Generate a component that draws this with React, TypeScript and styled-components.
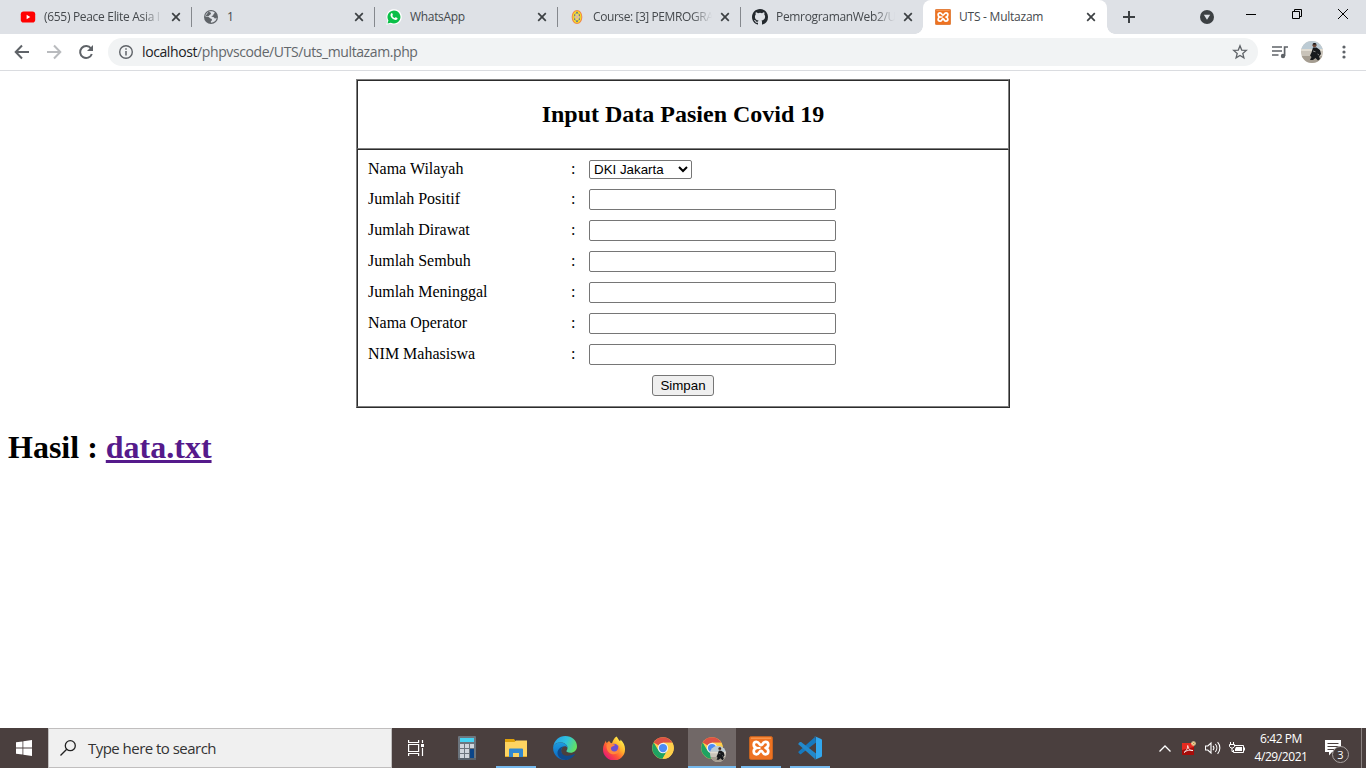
import React from "react";
import styled, { createGlobalStyle, css } from "styled-components";

const Global = createGlobalStyle`
  * { box-sizing: border-box; }
  html, body { margin: 0; padding: 0; background: #fff; overflow: hidden; }
  svg { display: block; flex: none; }
`;

const ui = `"Open Sans", "Noto Sans", sans-serif`;
const serif = `"Liberation Serif", "Times New Roman", serif`;
const sans = `"Liberation Sans", Arial, sans-serif`;

const Screen = styled.div`
  width: 1366px;
  height: 768px;
  display: flex;
  flex-direction: column;
  background: #fff;
  overflow: hidden;
`;

/* ---------- browser frame ---------- */

const TabStrip = styled.div`
  height: 34px;
  flex: none;
  display: flex;
  padding-left: 8px;
  background: #dee1e6;
`;

const TabBox = styled.div<{ $active?: boolean; $line?: boolean }>`
  position: relative;
  width: 183px;
  height: 34px;
  flex: none;
  display: flex;
  align-items: center;
  padding-left: 12px;
  ${(p) =>
    p.$line &&
    css`
      &::after {
        content: "";
        position: absolute;
        right: -1px;
        top: 7px;
        width: 1px;
        height: 20px;
        background: #85888d;
      }
    `}
  ${(p) =>
    p.$active &&
    css`
      width: 184px;
      background: #fff;
      border-radius: 8px 8px 0 0;
      &::before,
      &::after {
        content: "";
        position: absolute;
        bottom: 0;
        width: 8px;
        height: 8px;
      }
      &::before {
        left: -8px;
        background: radial-gradient(circle at 0 0, transparent 7.5px, #fff 8px);
      }
      &::after {
        right: -8px;
        background: radial-gradient(circle at 100% 0, transparent 7.5px, #fff 8px);
      }
    `}
`;

const Title = styled.span<{ $spacing: number; $fade?: boolean }>`
  width: 120px;
  margin-left: 8px;
  white-space: nowrap;
  font: 12px/18px ${ui};
  letter-spacing: ${(p) => p.$spacing}px;
  color: #45494d;
  ${(p) =>
    p.$fade &&
    css`
      mask-image: linear-gradient(90deg, #000 98px, transparent 119px);
    `}
`;

const CloseSlot = styled.span`
  margin-left: 7px;
`;

const NewTab = styled.div`
  width: 44px;
  display: grid;
  place-items: center;
`;

const WindowControls = styled.div`
  margin-left: auto;
  display: flex;
  align-items: flex-start;
`;

const ControlSlot = styled.div<{ $w: number; $h: number }>`
  width: ${(p) => p.$w}px;
  height: ${(p) => p.$h}px;
  display: grid;
  place-items: center;
`;

const Toolbar = styled.div`
  height: 37px;
  flex: none;
  display: flex;
  align-items: center;
  padding-left: 6px;
  border-bottom: 1px solid #dadce0;
  background: #fff;
`;

const ToolSlot = styled.div<{ $w?: number }>`
  width: ${(p) => p.$w ?? 32}px;
  height: 28px;
  display: grid;
  place-items: center;
`;

const AddressBar = styled.div`
  width: 1150px;
  height: 28px;
  margin-left: 6px;
  padding: 0 10px;
  display: flex;
  align-items: center;
  border-radius: 14px;
  background: #f1f3f4;
`;

const Url = styled.span`
  flex: 1;
  margin-left: 8px;
  font: 14px/20px ${ui};
  letter-spacing: -0.4px;
  color: #63676b;
  b {
    font-weight: 400;
    color: #202124;
  }
`;

/* ---------- page ---------- */

const Page = styled.main`
  flex: 1;
  padding: 8px;
  font: 16px/18px ${serif};
  color: #000;
`;

const FormTable = styled.form`
  width: 654px;
  margin: 0 auto;
  border: 1px solid;
  border-color: #808080 #2c2c2c #2c2c2c #808080;
`;

const Cell = styled.section`
  border: 1px solid;
  border-color: #2c2c2c #808080 #808080 #2c2c2c;
`;

const HeaderCell = styled(Cell)`
  height: 69px;
  display: grid;
  place-items: center;
`;

const Heading = styled.h2`
  margin: 0;
  font: bold 24px/27px ${serif};
`;

const BodyCell = styled(Cell)`
  padding: 5px;
`;

const Row = styled.div`
  display: grid;
  grid-template-columns: 203px 18px 1fr;
  align-items: center;
  & > * {
    margin: 5px;
  }
`;

const Label = styled.label`
  padding-bottom: 2px;
  line-height: 17px;
`;

const Select = styled.select`
  width: 103px;
  height: 19px;
  padding: 0;
  border: 1px solid #767676;
  border-radius: 2px;
  background: #fff;
  color: #000;
  font: 13.333px ${sans};
`;

const Input = styled.input`
  width: 247px;
  height: 21px;
  padding: 1px 2px;
  border: 1px solid #767676;
  border-radius: 2px;
  background: #fff;
`;

const Actions = styled.div`
  height: 31px;
  padding: 5px;
  display: flex;
  justify-content: center;
`;

const Submit = styled.button`
  width: 62px;
  height: 21px;
  padding: 0;
  border: 1px solid #767676;
  border-radius: 3px;
  background: #efefef;
  color: #000;
  font: 13.333px/17px ${sans};
`;

const Result = styled.h1`
  margin: 21px 0 0;
  font: bold 32px/37px ${serif};
  a {
    color: #551a8b;
    text-decoration: underline;
  }
`;

/* ---------- taskbar ---------- */

const Taskbar = styled.footer`
  height: 40px;
  flex: none;
  display: flex;
  background: #4a3f3e;
`;

const Start = styled.div`
  width: 48px;
  display: grid;
  place-items: center;
`;

const Search = styled.div`
  width: 344px;
  padding-left: 11px;
  display: flex;
  align-items: center;
  border: 1px solid #c0bebe;
  background: #f0f0f0;
  color: #333;
  font: 15px/20px ${ui};
  letter-spacing: -0.53px;
  span {
    margin-left: 12px;
  }
`;

const TaskView = styled.div`
  width: 48px;
  margin-right: 3px;
  display: grid;
  place-items: center;
`;

const AppButton = styled.div<{ $open?: boolean; $active?: boolean }>`
  width: 48px;
  height: 40px;
  margin-right: 1px;
  display: grid;
  place-items: center;
  background: ${(p) =>
    p.$active
      ? "linear-gradient(#76b9ed, #76b9ed) 0 38px / 48px 2px no-repeat #716867"
      : p.$open
        ? "linear-gradient(#76b9ed, #76b9ed) 4px 38px / 40px 2px no-repeat"
        : "none"};
`;

const Tray = styled.div`
  margin-left: auto;
  display: flex;
  align-items: center;
`;

const TraySlot = styled.div<{ $w: number }>`
  width: ${(p) => p.$w}px;
  display: grid;
  place-items: center;
`;

const Clock = styled.div`
  width: 64px;
  padding-bottom: 1px;
  color: #fff;
  text-align: center;
  white-space: nowrap;
  font: 12px/18px ${ui};
  letter-spacing: -0.42px;
`;

const Notification = styled.div`
  position: relative;
  width: 48px;
  height: 40px;
  padding: 12px 0 0 12px;
`;

const Count = styled.span`
  position: absolute;
  left: 19px;
  top: 18px;
  width: 17px;
  height: 17px;
  border: 1px solid #aaa4a3;
  border-radius: 50%;
  background: #473d3c;
  color: #fff;
  text-align: center;
  font: 11px/15px ${ui};
`;

const ShowDesktop = styled.div`
  width: 5px;
  height: 40px;
  border-left: 1px solid #8a8281;
`;

/* ---------- drawings ---------- */

const Close = () => (
  <svg width="10" height="10" viewBox="0 0 10 10" stroke="#3c4043" strokeWidth="1.7">
    <path d="M1.2 1.2l7.6 7.6M8.8 1.2L1.2 8.8" />
  </svg>
);

const YouTube = () => (
  <svg width="16" height="16" viewBox="0 0 16 16">
    <rect x=".8" y="2.4" width="14.4" height="11.2" rx="2.8" fill="#f00" />
    <path d="M6.6 5.8v4.4L10.3 8z" fill="#fff" />
  </svg>
);

const Globe = () => (
  <svg width="16" height="16" viewBox="0 0 16 16">
    <circle cx="8" cy="8" r="7" fill="#5f6368" />
    <path d="M8 2.3c1.5 0 2.8.5 3.8 1.3-.3 1-1.4 1.3-1.5 2.4-.1 1-1.6.5-1.9 1.6.9.5 2.6.2 3 1.3.5 1 2.1.3 2.4-.3A5.8 5.8 0 0 1 8 13.7c-.3-.8-.2-1.6.6-2 .5-.4.6-1.5-.3-1.9-1-.4-1.8-.5-2.2-1.5C5 8 3.5 8 2.3 7.3 2.6 4.5 5 2.3 8 2.3z" fill="#dee1e6" />
    <path d="M5.5 2.7c.8.5 2.5.5 2.5 1.7S6.2 5.6 6 6.8c-.3 1-2.5.4-3.5.2z" fill="#5f6368" />
  </svg>
);

const WhatsApp = () => (
  <svg width="16" height="16" viewBox="0 0 16 16">
    <path d="M.3 15.700l1.100-4A7.700 7.700 0 1 1 4.500 14.700z" fill="#fff" />
    <path d="M1.500 14.500l.9-3.100A6.500 6.500 0 1 1 4.800 13.700z" fill="#0abf48" />
    <path d="M5.4 4.3c.3-.3.800-.2.900.1l.6 1.4c.1.4-.5.8-.5 1.100.4.9 1.300 1.700 2.300 2.100.4.100.8-.8 1.200-.7l1.400.7c.4.2.2 1.200-.3 1.600-1.900 1.500-6.500-1.600-6.500-4.600 0-.7.5-1.300.9-1.700z" fill="#fff" />
  </svg>
);

const Campus = () => (
  <svg width="16" height="16" viewBox="0 0 16 16">
    <ellipse cx="8" cy="8" rx="4.8" ry="6.5" fill="#fce51c" stroke="#f08b4d" strokeWidth="1.100" />
    <ellipse cx="8" cy="8" rx="3" ry="4" fill="#f2df55" stroke="#a5a061" strokeWidth=".7" />
    <circle cx="8" cy="8" r="1.700" fill="#d7b5b1" />
    <g fill="#586ca0">
      <rect x="7.200" y="2.800" width="1.600" height="1.600" />
      <rect x="7.200" y="11.500" width="1.600" height="1.600" />
      <rect x="5" y="5.500" width="1.300" height="1.300" />
      <rect x="9.700" y="5.500" width="1.300" height="1.300" />
      <rect x="5" y="9.500" width="1.300" height="1.300" />
      <rect x="9.700" y="9.500" width="1.300" height="1.300" />
    </g>
  </svg>
);

const GitHub = () => (
  <svg width="16" height="16" viewBox="0 0 16 16" fill="#24292e">
    <path d="M8 0C3.58 0 0 3.58 0 8c0 3.54 2.29 6.53 5.47 7.59.4.07.55-.17.55-.38 0-.19-.01-.82-.01-1.49-2.01.37-2.53-.49-2.69-.94-.09-.23-.48-.94-.82-1.13-.28-.15-.68-.52-.01-.53.63-.01 1.08.58 1.23.82.72 1.21 1.87.87 2.33.66.07-.52.28-.87.51-1.07-1.78-.2-3.64-.89-3.64-3.95 0-.87.31-1.59.82-2.15-.08-.2-.36-1.02.08-2.12 0 0 .67-.21 2.2.82a7.600 7.600 0 0 1 4 0c1.53-1.04 2.2-.82 2.2-.82.44 1.1.16 1.92.08 2.12.51.56.82 1.27.82 2.15 0 3.07-1.87 3.75-3.65 3.95.29.25.54.73.54 1.48 0 1.07-.01 1.93-.01 2.2 0 .21.15.46.55.38A8 8 0 0 0 16 8c0-4.42-3.58-8-8-8z" />
  </svg>
);

const Xampp = ({ size }: { size: number }) => (
  <svg width={size} height={size} viewBox="0 0 24 24">
    <rect x=".4" y=".4" width="23.2" height="23.2" rx="2" fill="#ee7221" stroke="#cf661e" strokeWidth=".8" />
    <path d="M2 2.2h20" stroke="#fa9b55" strokeWidth="1.2" />
    <g fill="none" stroke="#fff" strokeWidth="2.700" strokeLinejoin="round">
      <path d="M7.500 12C3.700 11 3.900 5.800 7.500 5.800c2.800 0 2.600 3.300 4.500 3.300s1.700-3.300 4.500-3.300c3.600 0 3.800 5.200 0 6.200 3.800 1 3.600 6.300 0 6.300-2.800 0-2.600-3.400-4.500-3.400s-1.700 3.400-4.500 3.400C3.900 18.300 3.700 13 7.500 12z" />
      <path d="M7 12h4.500" strokeWidth="2.200" />
    </g>
  </svg>
);

const Avatar = ({ size }: { size: number }) => (
  <svg width={size} height={size} viewBox="0 0 22 22">
    <defs>
      <clipPath id={`face${size}`}>
        <circle cx="11" cy="11" r="11" />
      </clipPath>
    </defs>
    <g clipPath={`url(#face${size})`}>
      <rect width="22" height="22" fill="#c9c3b9" />
      <rect width="22" height="8" fill="#bccbd4" />
      <rect y="8" width="22" height="2" fill="#e1dcd2" />
      <path d="M0 15h22v7H0z" fill="#a59d91" />
      <circle cx="13.500" cy="4.200" r="2" fill="#6d4a3b" />
      <path d="M11.500 3.500c.3-2 3.700-2 4 0z" fill="#17191c" />
      <path d="M12 6.500h3.500l3.500 2.500 1 4-2 2.500 1 2.500-2 1.500-2.500-2.500-2.500 2h-3l1.500-3-1.500-1.500 1.500-3z" fill="#17191c" />
      <path d="M12 10l2.500.8M16.500 13l1.500 1" stroke="#858585" />
    </g>
  </svg>
);

const Chrome = () => (
  <svg width="22" height="22" viewBox="0 0 24 24">
    <circle cx="12" cy="12" r="11.8" fill="#ffd04b" />
    <path d="M12 12L1.800 6.100A11.800 11.800 0 0 1 22.300 6.300H12z" fill="#dd5144" />
    <path d="M1.800 6.100A11.800 11.800 0 0 0 11.500 23.800l5.200-9L12 12 7 14.800z" fill="#1ea362" />
    <path d="M22.200 6.300A11.800 11.800 0 0 1 11.500 23.800L17 14.500 12 6.300z" fill="#ffd04b" />
    <circle cx="12" cy="12" r="5.7" fill="#f1f1f1" />
    <circle cx="12" cy="12" r="4.5" fill="#4c8bf5" />
  </svg>
);

const ProfileChrome = styled.div`
  position: relative;
  width: 24px;
  height: 24px;
  padding: 1px;
  & > svg:last-child {
    position: absolute;
    left: 10px;
    top: 10px;
  }
`;

const Calculator = () => (
  <svg width="18" height="24" viewBox="0 0 18 24">
    <rect width="18" height="24" rx="1" fill="#6c757e" />
    <path d="M0 22h18v2H0z" fill="#58616b" />
    <rect x="2" y="2" width="14" height="4" fill="#45d3f3" />
    <g fill="#cfd5dc">
      {[8, 13, 18].map((y) =>
        [2, 7, 12].map((x) => <rect key={`${x}-${y}`} x={x} y={y} width="4" height="4" />)
      )}
    </g>
    <path d="M12 13h4v9h-4z" fill="#0b4588" />
  </svg>
);

const Explorer = () => (
  <svg width="22" height="19" viewBox="0 0 22 19">
    <path d="M0 0h9l1.500 2H22v5H0z" fill="#dfa10a" />
    <path d="M0 3h9.500L11 1.500h11V18H0z" fill="#fed461" />
    <path d="M0 17h22v1H0z" fill="#e7ac27" />
    <path d="M4 10.500a1 1 0 0 1 1-1h12a1 1 0 0 1 1 1V18h-4v-4H8v4H4z" fill="#3288cf" />
    <path d="M8 14h6v4H8z" fill="#fed461" />
  </svg>
);

const Edge = () => (
  <svg width="24" height="24" viewBox="0 0 24 24">
    <defs>
      <linearGradient id="edgeTop" x1="0" y1=".3" x2="1" y2=".6">
        <stop offset="0" stopColor="#269ee4" />
        <stop offset=".5" stopColor="#2fc2df" />
        <stop offset="1" stopColor="#66e35a" />
      </linearGradient>
      <linearGradient id="edgeLow" x1="0" y1="0" x2="0" y2="1">
        <stop offset="0" stopColor="#1c9be0" />
        <stop offset="1" stopColor="#0c65bd" />
      </linearGradient>
    </defs>
    <path d="M.2 11C1 4.500 6 0 12.200 0 19 0 24 4.800 24 10.300c0 4-3 6.500-6.500 6.500-3 0-4.200-1-4.200-1.700 0-.5 1.200-1.200 1.200-3.200C14.500 8.500 11 6.500 7.500 6.500 3.500 6.500 1 8.500.2 11z" fill="url(#edgeTop)" />
    <path d="M.2 11C1 8.300 4 6.500 7.500 6.500c4 0 7 2.500 7 5.400-.4-1-1.400-1.700-2.600-1.700-2.400 0-4 2.300-3.800 5 .2 4.200 4 7.300 8 7.500-1.400.8-2.700 1.200-4.100 1.200C5 24-.5 18.200.2 11z" fill="url(#edgeLow)" />
    <path d="M8.200 15.200c-.2-2.300 1-4 2.200-4.700C6.500 11 4 14.500 4.600 18c.8 4 5 6.300 9 5.900 3.500-.5 6.500-2.400 8.200-5.300.3-.5-.1-.7-.5-.5-5.300 2.700-12.500 2.200-13.100-2.900z" fill="#114a8b" />
  </svg>
);

const Firefox = () => (
  <svg width="24" height="24" viewBox="0 0 24 24">
    <defs>
      <linearGradient id="fox" x1=".85" y1=".1" x2=".15" y2=".9">
        <stop offset="0" stopColor="#fff44f" />
        <stop offset=".35" stopColor="#ffb12b" />
        <stop offset=".65" stopColor="#ff5634" />
        <stop offset="1" stopColor="#e51778" />
      </linearGradient>
    </defs>
    <path d="M14.500.5c1.500 1.500 2 3.300 3.500 4.800.5-.5.5-1.300.5-1.800 3.200 3 4.700 6.500 4.500 10A11 11 0 0 1 1 13.500C1 9.500 2.500 7 4 4.500c0 1 .2 2 .8 2.500C6 6 6.700 5.500 7 4.500c.5 1.500 1.200 2.500 3 2.700C11 4.500 12 2 14.500.5z" fill="url(#fox)" />
    <circle cx="12" cy="12.8" r="5" fill="#7651d8" />
    <path d="M4.500 9c2-2 4-1.500 5.500-.8 1 .4 2.500.3 3 .6-.4 1-2 1.400-3 2 .2 2.400 1.600 3.200 3.500 3.200 2.300 0 3-2.200 2.500-3.800 2.200 1.500 2.500 5-.5 7C11 20 4 17.500 4.500 9z" fill="#ff873c" />
    <circle cx="12.300" cy="12" r="3.400" fill="#6b4fd0" />
    <path d="M5.500 9c2-1.500 4.500-.8 7.500-.2-.4 1-2 1.400-3 2-1 .5-1.500 1.500-1 3C6.500 13 5.500 11 5.500 9z" fill="#ff873c" />
  </svg>
);

const VSCode = () => (
  <svg width="24" height="24" viewBox="0 0 24 24">
    <path d="M17.500.4L.6 15.600a.8.8 0 0 0 0 1.100l1.300 1.200c.4.3.8.3 1.200 0L18 6.500z" fill="#1679be" />
    <path d="M17.500 23.600L.6 8.400a.8.8 0 0 1 0-1.100l1.300-1.200c.4-.3.800-.3 1.200 0L18 17.500z" fill="#2389cb" />
    <path d="M17.500.4l5.700 2.700c.5.2.8.6.8 1.200v15.400c0 .6-.3 1-.8 1.200l-5.700 2.700c-.5.2-.9.100-1.200-.2.700.4 1.700 0 1.700-.9V1.500c0-.9-1-1.300-1.700-.9.3-.3.7-.4 1.200-.2z" fill="#31a7ee" />
  </svg>
);

const tabs = [
  { icon: <YouTube />, title: "(655) Peace Elite Asia I", spacing: -0.31, line: true, fade: true },
  { icon: <Globe />, title: "1", spacing: 0, line: true },
  { icon: <WhatsApp />, title: "WhatsApp", spacing: -0.32, line: true },
  { icon: <Campus />, title: "Course: [3] PEMROGRA", spacing: -0.42, line: true, fade: true },
  { icon: <GitHub />, title: "PemrogramanWeb2/U", spacing: -0.33, fade: true },
  { icon: <Xampp size={16} />, title: "UTS - Multazam", spacing: -0.24, active: true },
];

const fields = [
  "Jumlah Positif",
  "Jumlah Dirawat",
  "Jumlah Sembuh",
  "Jumlah Meninggal",
  "Nama Operator",
  "NIM Mahasiswa",
];

const apps = [
  { icon: <Calculator /> },
  { icon: <Explorer />, open: true },
  { icon: <Edge /> },
  { icon: <Firefox /> },
  { icon: <Chrome /> },
  {
    icon: (
      <ProfileChrome>
        <Chrome />
        <Avatar size={16} />
      </ProfileChrome>
    ),
    active: true,
  },
  { icon: <Xampp size={24} />, open: true },
  { icon: <VSCode />, open: true },
];

export default function App() {
  return (
    <Screen>
      <Global />
      <TabStrip>
        {tabs.map((t) => (
          <TabBox key={t.title} $active={t.active} $line={t.line}>
            {t.icon}
            <Title $spacing={t.spacing} $fade={t.fade}>{t.title}</Title>
            <CloseSlot><Close /></CloseSlot>
          </TabBox>
        ))}
        <NewTab>
          <svg width="12" height="12" viewBox="0 0 12 12" stroke="#3c4043" strokeWidth="2">
            <path d="M6 0v12M0 6h12" />
          </svg>
        </NewTab>
        <WindowControls>
          <ControlSlot $w={42} $h={34}>
            <svg width="14" height="14" viewBox="0 0 14 14">
              <circle cx="7" cy="7" r="7" fill="#3c4043" />
              <path d="M3.800 4.800h6.400L7 9.800z" fill="#dee1e6" />
            </svg>
          </ControlSlot>
          <ControlSlot $w={46} $h={28}>
            <svg width="10" height="10" viewBox="0 0 10 10" stroke="#000"><path d="M0 5.500h10" /></svg>
          </ControlSlot>
          <ControlSlot $w={46} $h={28}>
            <svg width="10" height="10" viewBox="0 0 10 10" stroke="#000" fill="none">
              <path d="M.5 2.500h7v7h-7zM2.500 2V.5h7v7H8" />
            </svg>
          </ControlSlot>
          <ControlSlot $w={46} $h={28}>
            <svg width="10" height="10" viewBox="0 0 10 10" stroke="#000"><path d="M0 0l10 10M10 0L0 10" /></svg>
          </ControlSlot>
        </WindowControls>
      </TabStrip>

      <Toolbar>
        <ToolSlot>
          <svg width="16" height="16" viewBox="0 0 16 16" fill="none" stroke="#5f6368" strokeWidth="2">
            <path d="M15 8H2M8 1.500L1.700 8 8 14.500" />
          </svg>
        </ToolSlot>
        <ToolSlot>
          <svg width="16" height="16" viewBox="0 0 16 16" fill="none" stroke="#b9bbbe" strokeWidth="2">
            <path d="M1 8h13M8 1.500L14.300 8 8 14.500" />
          </svg>
        </ToolSlot>
        <ToolSlot>
          <svg width="16" height="16" viewBox="0 0 16 16">
            <path d="M13 4.500A6 6 0 1 0 13.800 10" fill="none" stroke="#5f6368" strokeWidth="2" />
            <path d="M15 1v6H9z" fill="#5f6368" />
          </svg>
        </ToolSlot>
        <AddressBar>
          <svg width="16" height="16" viewBox="0 0 16 16">
            <circle cx="8" cy="8" r="6.300" fill="none" stroke="#5f6368" strokeWidth="1.400" />
            <path d="M7.250 7h1.500v4.500h-1.500zM7.250 4.300h1.500v1.500h-1.500z" fill="#5f6368" />
          </svg>
          <Url><b>localhost</b>/phpvscode/UTS/uts_multazam.php</Url>
          <svg width="16" height="16" viewBox="0 0 16 16" fill="none" stroke="#5f6368" strokeWidth="1.300">
            <path d="M8 1.800l1.700 4.300 4.600.3-3.500 3 1.100 4.500L8 11.500l-3.900 2.400 1.100-4.500-3.500-3 4.600-.3z" />
          </svg>
        </AddressBar>
        <ToolSlot $w={43}>
          <svg width="16" height="14" viewBox="0 0 16 14" stroke="#5f6368" strokeWidth="1.700" fill="none">
            <path d="M0 2h10M0 6h10M0 10h6.500M12.600 11V2H16" />
            <circle cx="11" cy="11" r="2.200" fill="#5f6368" stroke="none" />
          </svg>
        </ToolSlot>
        <ToolSlot $w={22}><Avatar size={22} /></ToolSlot>
        <ToolSlot $w={42}>
          <svg width="4" height="14" viewBox="0 0 4 14" fill="#5f6368">
            <circle cx="2" cy="2" r="1.600" /><circle cx="2" cy="7" r="1.600" /><circle cx="2" cy="12" r="1.600" />
          </svg>
        </ToolSlot>
      </Toolbar>

      <Page>
        <FormTable>
          <HeaderCell><Heading>Input Data Pasien Covid 19</Heading></HeaderCell>
          <BodyCell>
            <Row>
              <Label>Nama Wilayah</Label>
              <Label as="span">:</Label>
              <Select defaultValue="DKI Jakarta">
                <option>DKI Jakarta</option>
              </Select>
            </Row>
            {fields.map((name) => (
              <Row key={name}>
                <Label>{name}</Label>
                <Label as="span">:</Label>
                <Input type="text" />
              </Row>
            ))}
            <Actions><Submit type="button">Simpan</Submit></Actions>
          </BodyCell>
        </FormTable>
        <Result>Hasil : <a href="#data">data.txt</a></Result>
      </Page>

      <Taskbar>
        <Start>
          <svg width="16" height="16" viewBox="0 0 16 16" fill="#fff">
            <path d="M0 2.300l6.500-.9v6.200H0zM7.300 1.300L16 0v7.600H7.300zM0 8.400h6.500v6.200L0 13.700zM7.300 8.400H16V16l-8.700-1.300z" />
          </svg>
        </Start>
        <Search>
          <svg width="16" height="16" viewBox="0 0 16 16" fill="none" stroke="#222" strokeWidth="1.300">
            <circle cx="10.300" cy="5.700" r="5" />
            <path d="M6.700 9.300L.5 15.500" />
          </svg>
          <span>Type here to search</span>
        </Search>
        <TaskView>
          <svg width="16" height="16" viewBox="0 0 16 16" fill="none" stroke="#fff" strokeWidth="1.200">
            <path d="M.6 0v2.500h10V0M.6 16v-2.500h10V16M.6 4.500h10v7H.6zM14.500 0v3M14.500 8v8" />
            <path d="M13 4h3v3h-3z" fill="#fff" stroke="none" />
          </svg>
        </TaskView>
        {apps.map((a, i) => (
          <AppButton key={i} $open={a.open} $active={a.active}>{a.icon}</AppButton>
        ))}
        <Tray>
          <TraySlot $w={24}>
            <svg width="12" height="7" viewBox="0 0 12 7" fill="none" stroke="#fff" strokeWidth="1.300">
              <path d="M.5 6.500L6 1l5.500 5.500" />
            </svg>
          </TraySlot>
          <TraySlot $w={24}>
            <svg width="14" height="14" viewBox="0 0 14 14">
              <path d="M0 2h12v12H0z" fill="#a50d0a" />
              <path d="M0 2h12v4L0 9z" fill="#e62b20" />
              <path d="M2 11.500c3-2 4-5 3.700-7C6.500 8.500 8.500 10 11 9.500 8 8.500 4 9.500 2 11.500z" fill="none" stroke="#fff" strokeWidth=".8" />
              <circle cx="11.500" cy="2.500" r="2.300" fill="#eed4a0" />
              <path d="M10.700 1.500l2 2M12.700 1.500l-2 2" stroke="#a58138" strokeWidth=".7" />
            </svg>
          </TraySlot>
          <TraySlot $w={24}>
            <svg width="16" height="14" viewBox="0 0 16 14" fill="none" stroke="#fff" strokeWidth="1.100">
              <path d="M.5 5v4h2.300L6 12V2L2.800 5zM8 4.800c1 1.200 1 3.200 0 4.400M10.300 3c2 2.300 2 5.700 0 8M12.600 1.200c3 3.300 3 8.300 0 11.600" />
            </svg>
          </TraySlot>
          <TraySlot $w={24}>
            <svg width="16" height="12" viewBox="0 0 16 12" fill="none" stroke="#fff">
              <path d="M6 3.500h8.500v7h-10V8M15.500 5.500v3M1.500 0v2.500M4.500 0v2.500M.5 2.500h5v2L4 6H2L.5 4.500zM3 6v3.500h1.500" />
              <path d="M7 5h6v4H6V7z" fill="#fff" stroke="none" />
            </svg>
          </TraySlot>
          <Clock>6:42 PM<br />4/29/2021</Clock>
          <Notification>
            <svg width="16" height="16" viewBox="0 0 16 16">
              <path d="M0 0h16v12H7l-3 3.500V12H0z" fill="#fff" />
              <path d="M2.500 3.500h11M2.500 6.500h11M2.500 9.500h7" stroke="#4a3f3e" />
            </svg>
            <Count>3</Count>
          </Notification>
          <ShowDesktop />
        </Tray>
      </Taskbar>
    </Screen>
  );
}
